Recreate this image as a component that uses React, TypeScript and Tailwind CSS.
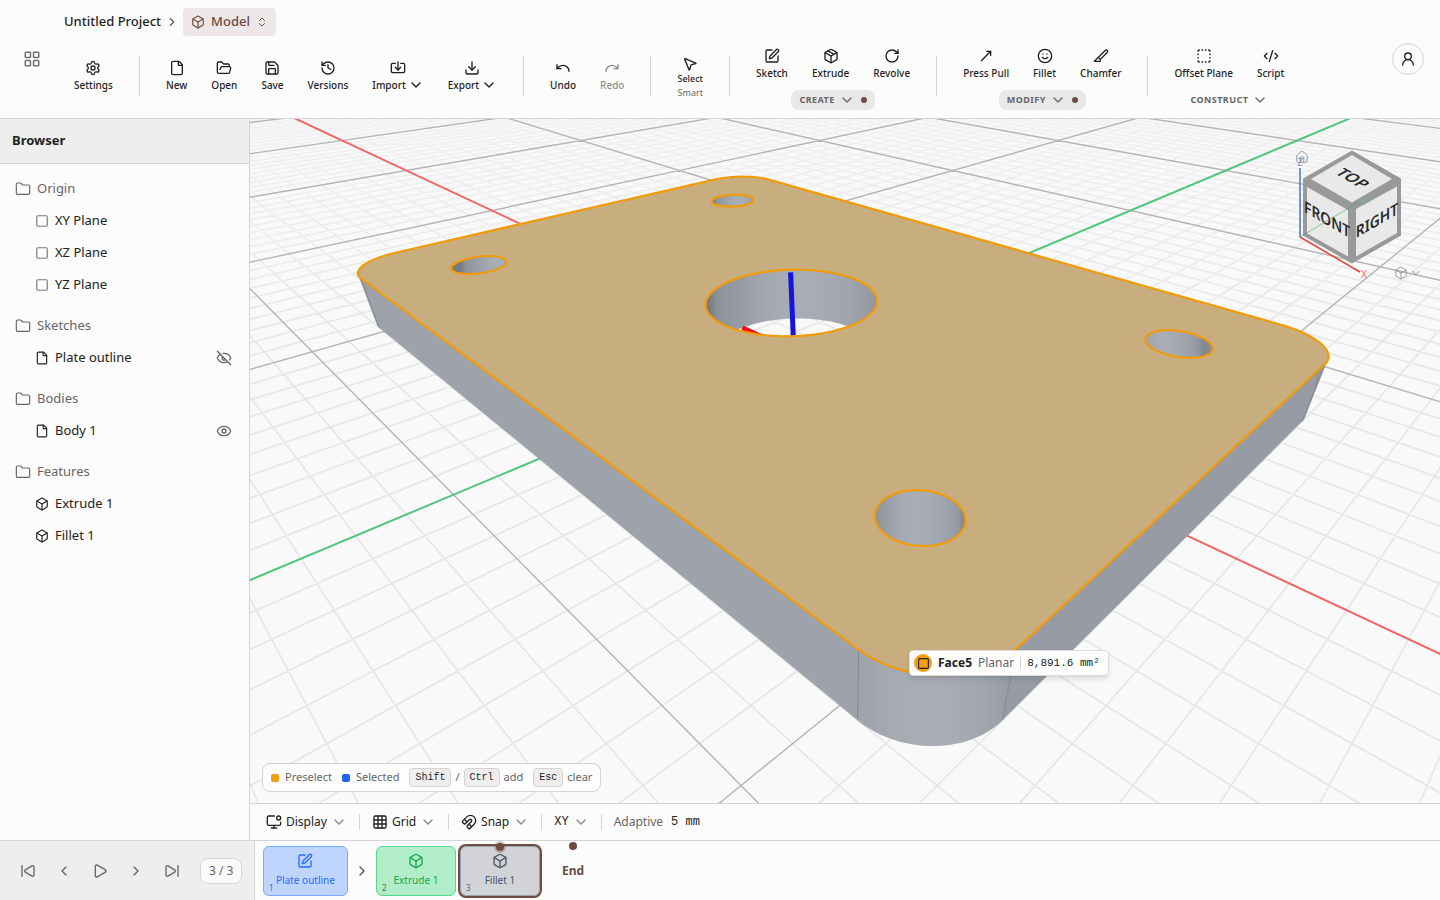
import { useState } from 'react';
import type { ReactNode } from 'react';
import {
  Box, ChevronDown, ChevronLeft, ChevronRight, ChevronsUpDown, CodeXml, Download, Eye, EyeOff, File,
  Folder, FolderOpen, Grid3x3, History, House, Import, LayoutGrid, Magnet, MonitorDot, MousePointer2,
  MoveUpRight, Package, Play, Redo, RotateCw, Save, Settings, SkipBack, SkipForward, Slice, Smile,
  Square, SquareDashed, SquarePen, Undo, UserRound,
} from 'lucide-react';
import type { LucideIcon } from 'lucide-react';
import { clsx } from 'clsx';

/* ---------- scene ---------- */

type Vec3 = [number, number, number];

const VIEW_W = 1190;
const VIEW_H = 721;
const FOCAL = 773.1;
const PLATE = { x: 60, y: 40, h: 8, r: 8 };
const HOLES = [
  { x: -45, y: 25, r: 4 },
  { x: -45, y: -25, r: 4 },
  { x: 45, y: 25, r: 4 },
  { x: 45, y: -25, r: 4 },
  { x: 0, y: 0, r: 12 },
];

// isometric direction, perspective lens (fov 50)
function toCamera([x, y, z]: Vec3): Vec3 {
  return [
    (x + y) / Math.SQRT2 - 7.5,
    (-x + y + 2 * z) / Math.sqrt(6) + 18.75,
    (-x + y - z) / Math.sqrt(3) + 113.5,
  ];
}

function screenPoint([x, y, z]: Vec3): [number, number] {
  return [VIEW_W / 2 + (FOCAL * x) / z, VIEW_H / 2 - (FOCAL * y) / z];
}

function toScreen(p: Vec3) {
  const [x, y] = screenPoint(p);
  return `${x.toFixed(2)} ${y.toFixed(2)}`;
}

const project = (p: Vec3) => toScreen(toCamera(p));
const polygon = (points: Vec3[]) => `M${points.map(project).join('L')}Z`;

// segment clipped against the near plane
function segment(a: Vec3, b: Vec3) {
  const near = 8;
  const p = toCamera(a);
  const q = toCamera(b);
  if (p[2] < near && q[2] < near) return '';
  const cut = (from: Vec3, to: Vec3): Vec3 => {
    if (from[2] >= near) return from;
    const t = (near - from[2]) / (to[2] - from[2]);
    return [from[0] + (to[0] - from[0]) * t, from[1] + (to[1] - from[1]) * t, near];
  };
  return `M${toScreen(cut(p, q))}L${toScreen(cut(q, p))}`;
}

function gridLines(step: number, skip: number) {
  const extent = 700;
  let d = '';
  for (let v = -extent; v <= extent; v += step) {
    if (v % skip === 0) continue;
    d += segment([v, -extent, 0], [v, extent, 0]) + segment([-extent, v, 0], [extent, v, 0]);
  }
  return d;
}

const minorGrid = gridLines(5, 50);
const majorGrid = gridLines(50, 1400);
const axisX = segment([-700, 0, 0], [700, 0, 0]);
const axisY = segment([0, -700, 0], [0, 700, 0]);

function ring(cx: number, cy: number, r: number, z: number, steps = 160): Vec3[] {
  return Array.from({ length: steps }, (_, i) => {
    const a = (i / steps) * Math.PI * 2;
    return [cx + r * Math.cos(a), cy + r * Math.sin(a), z];
  });
}

function plateOutline(z: number): Vec3[] {
  const { x, y, r } = PLATE;
  const corners = [[x - r, y - r], [r - x, y - r], [r - x, r - y], [x - r, r - y]];
  return corners.flatMap(([cx, cy], k) =>
    Array.from({ length: 41 }, (_, i): Vec3 => {
      const a = ((k + i / 40) * Math.PI) / 2;
      return [cx + r * Math.cos(a), cy + r * Math.sin(a), z];
    }),
  );
}

function shade(nx: number, ny: number) {
  const front = Math.max(0, (nx - ny) / Math.SQRT2);
  // soft fill light from the left
  const d = Math.min(1, front + Math.max(0, -(nx + ny)) * (1 - front) * 0.15);
  const stops: [number, number[]][] = [[0, [118, 122, 129]], [0.35, [145, 149, 156]], [0.7, [156, 161, 169]], [1, [168, 173, 182]]];
  const i = d < 0.35 ? 0 : d < 0.7 ? 1 : 2;
  const [d0, c0] = stops[i];
  const [d1, c1] = stops[i + 1];
  const t = Math.min(1, (d - d0) / (d1 - d0));
  const tint = Math.max(0, nx) * 5 * (1 - Math.abs(ny));
  return `rgb(${c0.map((c, k) => Math.round(c + (c1[k] - c) * t - tint)).join(',')})`;
}

interface Wall {
  d: string;
  x1: number;
  x2: number;
  stops: { offset: number; color: string }[];
}

// wall below a closed loop: the facets that face the viewer, shaded across the screen
function wall(loop: Vec3[], inward: boolean): Wall {
  const n = loop.length;
  const s = inward ? -1 : 1;
  const facets = loop.map((a, i) => {
    const b = loop[(i + 1) % n];
    const len = Math.hypot(b[0] - a[0], b[1] - a[1]) || 1;
    const nx = (s * (b[1] - a[1])) / len;
    const ny = (-s * (b[0] - a[0])) / len;
    // camera sits at about (86, -75) in plan
    return { a, b, nx, ny, facing: nx * (86 - a[0]) + ny * (-75 - a[1]) > 0 };
  });
  const first = facets.findIndex((f, i) => f.facing && !facets[(i + n - 1) % n].facing);
  const visible = [];
  for (let i = first; facets[i % n].facing; i++) visible.push(facets[i % n]);

  const top = [visible[0].a, ...visible.map((f) => f.b)];
  const bottom = top.map(([x, y]): Vec3 => [x, y, 0]).reverse();
  const midX = (p: Vec3) => screenPoint(toCamera([p[0], p[1], PLATE.h / 2]))[0];
  const marks = visible
    .flatMap((f) => [f.a, f.b].map((p) => ({ x: midX(p), color: shade(f.nx, f.ny) })))
    .sort((p, q) => p.x - q.x);
  const x1 = marks[0].x;
  const x2 = marks[marks.length - 1].x;
  return {
    d: polygon([...top, ...bottom]),
    x1,
    x2,
    stops: marks.map((m) => ({ offset: (m.x - x1) / (x2 - x1), color: m.color })),
  };
}

const outline = plateOutline(PLATE.h);
const holeRings = HOLES.map((h) => ring(h.x, h.y, h.r, PLATE.h));
const holesPath = holeRings.map(polygon).join('');
const facePath = polygon(outline) + holesPath;
const walls = [wall(outline, false), ...holeRings.map((loop) => wall(loop, true))];
const seams = [[52, -40], [60, -32], [-52, -40], [60, 32]]
  .map(([x, y]) => segment([x, y, PLATE.h], [x, y, 0]))
  .join('');

function Scene() {
  return (
    <svg
      className="absolute inset-0 h-full w-full"
      viewBox={`0 0 ${VIEW_W} ${VIEW_H}`}
      preserveAspectRatio="xMidYMid slice"
      aria-label="Model viewport"
    >
      <defs>
        <linearGradient id="minor" gradientUnits="userSpaceOnUse" x1="0" y1="0" x2="0" y2="240">
          <stop offset="0" stopColor="#f2f2f2" />
          <stop offset="1" stopColor="#e7e7e7" />
        </linearGradient>
        {walls.map((w, i) => (
          <linearGradient key={i} id={`wall-${i}`} gradientUnits="userSpaceOnUse" x1={w.x1} x2={w.x2} y1="0" y2="0">
            {w.stops.map((stop, k) => (
              <stop key={k} offset={stop.offset} stopColor={stop.color} />
            ))}
          </linearGradient>
        ))}
        <clipPath id="holes">
          <path d={holesPath} />
        </clipPath>
      </defs>
      <path d={minorGrid} stroke="url(#minor)" strokeWidth="1.8" fill="none" />
      <path d={majorGrid} stroke="#b4b4b4" strokeWidth="1.4" fill="none" />
      <path d={axisX} stroke="#f26566" strokeWidth="2" fill="none" />
      <path d={axisY} stroke="#50c57e" strokeWidth="2" fill="none" />

      <path d={walls[0].d} fill="url(#wall-0)" />
      <path d={seams} stroke="#858990" strokeWidth="1" fill="none" />

      <g clipPath="url(#holes)">
        {walls.slice(1).map((w, i) => (
          <path key={i} d={w.d} fill={`url(#wall-${i + 1})`} />
        ))}
        <path d={segment([-12, 0, 0], [-6, 0, 0])} stroke="#ee1515" strokeWidth="5" />
        <path d={segment([0, 0, 0], [0, 0, 12])} stroke="#1414dc" strokeWidth="5" />
      </g>

      <path d={facePath} fill="#c8ad7f" fillRule="evenodd" stroke="#f09b0c" strokeWidth="2.2" strokeLinejoin="round" />
    </svg>
  );
}

/* ---------- view cube ---------- */

function ViewCube() {
  return (
    <div className="absolute top-[26px] right-0 h-[145px] w-[150px]">
      <svg className="h-full w-full" viewBox="0 0 150 145" aria-label="View cube">
        <path d="M62 5.500 111 33.500V90.500L62 118.500 13 90.500V33.500Z" fill="#999" />
        <path d="M62 10 102 34 62 57.500 21 34Z" fill="#e9e9e9" />
        <path d="M17 42 58 65V111.500L17 88.500Z" fill="#e9e9e9" />
        <path d="M66 64 107 41.500V88L66 111.500Z" fill="#e9e9e9" />
        <g fill="#2a2a2a" fontFamily="Noto Sans, sans-serif" fontWeight="600" fontSize="16" textAnchor="middle">
          <text transform="matrix(.866 .5 -.866 .5 63 33)" y="6">TOP</text>
          <text transform="matrix(.866 .5 0 1 37 74)" y="6">FRONT</text>
          <text transform="matrix(.866 -.5 0 1 87 75)" y="6">RIGHT</text>
        </g>
        <path d="M10 92 69 57" stroke="#3ea75a" strokeOpacity="0.45" strokeWidth="1.2" />
        <path d="M10 92V23" stroke="#4375d8" strokeWidth="1.5" />
        <path d="M10 92 70 127" stroke="#e0463e" strokeWidth="1.5" />
        <g fontFamily="Noto Sans, sans-serif" fontSize="10" textAnchor="middle">
          <text x="10" y="21" fill="#7d9fe8">Z</text>
          <text x="74" y="60" fill="#6fb583">Y</text>
          <text x="74" y="133" fill="#ea6f6a">X</text>
        </g>
      </svg>
      <button aria-label="Home view" className="absolute top-[5px] left-[5px] text-[#8c8c8c]">
        <House size={14} strokeWidth={1.5} />
      </button>
      <button aria-label="View options" className="absolute top-[121px] left-[104px] flex items-center gap-0.5 text-[#8c8c8c]">
        <Box size={14} strokeWidth={1.5} />
        <ChevronDown size={12} />
      </button>
    </div>
  );
}

/* ---------- ribbon ---------- */

interface ToolProps {
  icon: LucideIcon;
  label: string;
  menu?: boolean;
  disabled?: boolean;
}

function Tool({ icon: Icon, label, menu, disabled }: ToolProps) {
  return (
    <button
      disabled={disabled}
      className={clsx('flex flex-col items-center gap-0.5 px-2.5 py-1.5 text-[#1f1f1f]', disabled && 'opacity-50')}
    >
      <Icon size={16} />
      <span className="flex h-3.5 items-center gap-0.5 text-[10px] leading-[14px] font-medium whitespace-nowrap">
        {label}
        {menu && <ChevronDown size={16} />}
      </span>
    </button>
  );
}

function Divider() {
  return <div className="mx-4 h-10 w-px shrink-0 bg-[#d4d4d4]" />;
}

function ToolGroup({ label, pinned, children }: { label: string; pinned?: boolean; children: ReactNode }) {
  return (
    <div className="flex flex-col items-center gap-1">
      <div className="flex gap-1">{children}</div>
      <button
        className={clsx(
          'flex h-5 items-center gap-1 rounded-lg px-2 text-[9px] leading-3 font-bold tracking-wider text-[#666] uppercase',
          pinned && 'bg-[#e8e8e8]',
        )}
      >
        {label}
        <ChevronDown size={16} />
        {pinned && <span className="ml-0.5 h-1.5 w-1.5 rounded-full bg-[#6d4c41]" />}
      </button>
    </div>
  );
}

function Header() {
  return (
    <header className="flex h-[119px] shrink-0 border-b border-[#d4d4d4] bg-[#fcfcfc]">
      <div className="flex h-[118px] w-16 shrink-0 items-center justify-center">
        <button aria-label="All apps" className="text-[#707070]">
          <LayoutGrid size={18} />
        </button>
      </div>
      <div className="min-w-0 flex-1">
        <div className="flex h-9 items-center gap-1 pt-2 text-[13px] font-medium text-[#1f1f1f]">
          <a href="#project">Untitled Project</a>
          <ChevronRight size={14} className="text-[#555]" />
          <button className="flex h-7 items-center gap-1.5 rounded bg-[#ede8e7] px-2 text-[#6d4c41]">
            <Box size={14} />
            Model
            <ChevronsUpDown size={12} />
          </button>
        </div>
        <div className="mt-1.5 flex h-[68px] items-center">
          <Tool icon={Settings} label="Settings" />
          <Divider />
          <div className="flex gap-1">
            <Tool icon={File} label="New" />
            <Tool icon={FolderOpen} label="Open" />
            <Tool icon={Save} label="Save" />
            <Tool icon={History} label="Versions" />
            <Tool icon={Import} label="Import" menu />
            <Tool icon={Download} label="Export" menu />
          </div>
          <Divider />
          <div className="flex gap-1">
            <Tool icon={Undo} label="Undo" />
            <Tool icon={Redo} label="Redo" disabled />
          </div>
          <Divider />
          <button className="flex flex-col items-center px-2.5 pt-1 text-[9px] leading-[14px] font-medium text-[#1f1f1f]">
            <MousePointer2 size={16} />
            <span>Select</span>
            <span className="font-normal text-[#666]">Smart</span>
          </button>
          <Divider />
          <ToolGroup label="Create" pinned>
            <Tool icon={SquarePen} label="Sketch" />
            <Tool icon={Package} label="Extrude" />
            <Tool icon={RotateCw} label="Revolve" />
          </ToolGroup>
          <Divider />
          <ToolGroup label="Modify" pinned>
            <Tool icon={MoveUpRight} label="Press Pull" />
            <Tool icon={Smile} label="Fillet" />
            <Tool icon={Slice} label="Chamfer" />
          </ToolGroup>
          <Divider />
          <ToolGroup label="Construct">
            <Tool icon={SquareDashed} label="Offset Plane" />
            <Tool icon={CodeXml} label="Script" />
          </ToolGroup>
        </div>
      </div>
      <div className="flex h-[118px] w-16 shrink-0 items-center justify-center">
        <button aria-label="Account" className="flex h-8 w-8 items-center justify-center rounded-full border border-[#d4d4d4] text-[#1f1f1f]">
          <UserRound size={16} />
        </button>
      </div>
    </header>
  );
}

/* ---------- browser tree ---------- */

interface TreeItem {
  name: string;
  icon: LucideIcon;
  muted?: boolean;
  visible?: boolean;
}

const tree: { name: string; items: TreeItem[] }[] = [
  {
    name: 'Origin',
    items: [
      { name: 'XY Plane', icon: Square, muted: true },
      { name: 'XZ Plane', icon: Square, muted: true },
      { name: 'YZ Plane', icon: Square, muted: true },
    ],
  },
  { name: 'Sketches', items: [{ name: 'Plate outline', icon: File, visible: false }] },
  { name: 'Bodies', items: [{ name: 'Body 1', icon: File, visible: true }] },
  { name: 'Features', items: [{ name: 'Extrude 1', icon: Box }, { name: 'Fillet 1', icon: Box }] },
];

function Sidebar() {
  return (
    <aside className="w-[250px] shrink-0 border-r border-[#d4d4d4] bg-[#fcfcfc] text-[13px] text-[#222]">
      <h2 className="flex h-[45px] items-center border-b border-[#d4d4d4] bg-[#eee] px-3 font-bold">Browser</h2>
      <div className="flex flex-col gap-[9px] pt-[9px]">
        {tree.map((group) => (
          <section key={group.name}>
            <h3 className="flex h-8 items-center gap-1.5 pl-[15px] text-[#666]">
              <Folder size={16} strokeWidth={1.75} />
              {group.name}
            </h3>
            <ul>
              {group.items.map(({ name, icon: Icon, muted, visible }) => (
                <li key={name} className="flex h-8 items-center gap-1.5 pr-[17px] pl-[35px]">
                  <Icon size={14} className={muted ? 'text-[#777]' : undefined} />
                  <span className="flex-1">{name}</span>
                  {visible !== undefined && (
                    <button aria-label={`Toggle ${name}`} className="text-[#666]">
                      {visible ? <Eye size={16} /> : <EyeOff size={16} />}
                    </button>
                  )}
                </li>
              ))}
            </ul>
          </section>
        ))}
      </div>
    </aside>
  );
}

/* ---------- viewport overlays ---------- */

function Kbd({ children }: { children: ReactNode }) {
  return (
    <kbd className="flex h-[19px] items-center rounded-sm border border-[#d4d4d4] bg-[#eee] px-[5px] font-['Liberation_Mono',monospace] text-[10px] text-[#222]">
      {children}
    </kbd>
  );
}

function Legend() {
  return (
    <div className="absolute bottom-12 left-3 flex h-[29px] items-center rounded-lg border border-[#d4d4d4] bg-[#fdfdfd] px-2 text-[11px] text-[#666]">
      <span className="mr-1.5 h-2 w-2 rounded-[2px] bg-[#f59e0b]" />
      Preselect
      <span className="mr-1.5 ml-2.5 h-2 w-2 rounded-[2px] bg-[#2563eb]" />
      Selected
      <span className="ml-2.5 flex items-center gap-1">
        <Kbd>Shift</Kbd>/<Kbd>Ctrl</Kbd>add
      </span>
      <span className="ml-2.5 flex items-center gap-1">
        <Kbd>Esc</Kbd>clear
      </span>
    </div>
  );
}

function FaceTooltip() {
  return (
    <div className="absolute top-[531px] left-[659px] flex h-[26px] items-center gap-1.5 rounded border border-[#ddd] bg-[#fdfdfd] pr-2 pl-1 text-[12px] text-[#666] shadow-md">
      <span className="flex h-[18px] w-[18px] items-center justify-center rounded-full bg-[#f59e0b] text-[#222]">
        <Square size={13} />
      </span>
      <span className="font-bold text-[#222]">Face5</span>
      <span>Planar</span>
      <span className="h-3 w-px bg-[#d4d4d4]" />
      <span className="font-['Liberation_Mono',monospace] text-[11px] text-[#222]">8,891.6 mm²</span>
    </div>
  );
}

const statusMenus = [
  { label: 'Display', icon: MonitorDot },
  { label: 'Grid', icon: Grid3x3 },
  { label: 'Snap', icon: Magnet },
];

function StatusBar() {
  return (
    <div className="absolute inset-x-0 bottom-0 flex h-[37px] items-center border-t border-[#d4d4d4] bg-[#fcfcfc]/95 pl-4 text-[12px] text-[#222]">
      {statusMenus.map(({ label, icon: Icon }) => (
        <div key={label} className="flex items-center">
          <button className="flex items-center gap-1">
            <Icon size={16} />
            {label}
            <ChevronDown size={16} className="text-[#888]" />
          </button>
          <span className="mx-3 h-4 w-px bg-[#d4d4d4]" />
        </div>
      ))}
      <button className="flex items-center gap-1 font-['Liberation_Mono',monospace]">
        XY
        <ChevronDown size={16} className="text-[#888]" />
      </button>
      <span className="mx-3 h-4 w-px bg-[#d4d4d4]" />
      <span className="text-[#666]">Adaptive</span>
      <span className="ml-2 font-['Liberation_Mono',monospace]">5 mm</span>
    </div>
  );
}

/* ---------- timeline ---------- */

const transport = [
  { label: 'First', icon: SkipBack },
  { label: 'Previous', icon: ChevronLeft },
  { label: 'Play', icon: Play },
  { label: 'Next', icon: ChevronRight },
  { label: 'Last', icon: SkipForward },
];

interface StepProps {
  index: number;
  label: string;
  icon: LucideIcon;
  className: string;
  active?: boolean;
  onSelect: (index: number) => void;
}

function Step({ index, label, icon: Icon, className, active, onSelect }: StepProps) {
  return (
    <button
      onClick={() => onSelect(index)}
      className={clsx(
        'relative flex h-[50px] flex-col items-center gap-1 rounded-md border px-3 pt-1.5 text-[10px] leading-[14px]',
        className,
        active && 'ring-2 ring-[#6d4c41]',
      )}
    >
      <Icon size={16} />
      {label}
      <span className="absolute bottom-0.5 left-[5px] text-[8px] leading-[10px] text-[#666]">{index}</span>
      {active && (
        <span className="absolute -top-1 left-1/2 h-2 w-2 -translate-x-1/2 rounded-full bg-[#6d4c41] ring-2 ring-[#6d4c41]/30" />
      )}
    </button>
  );
}

function Timeline() {
  const [current, setCurrent] = useState(3);

  return (
    <footer className="flex h-[60px] shrink-0 border-t border-[#d4d4d4] bg-[#fcfcfc]">
      <div className="flex w-[255px] shrink-0 items-center gap-1 border-r border-[#d4d4d4] bg-[#eee] pl-3 text-[#666]">
        {transport.map(({ label, icon: Icon }) => (
          <button key={label} aria-label={label} className="flex h-8 w-8 items-center justify-center">
            <Icon size={16} />
          </button>
        ))}
        <span className="ml-2 flex h-[26px] items-center rounded-lg border border-[#d8d8d8] bg-[#fafafa] px-2 text-[12px]">
          {current} / 3
        </span>
      </div>
      <div className="flex min-w-0 flex-1 items-center pl-2">
        <Step index={1} label="Plate outline" icon={SquarePen} active={current === 1} onSelect={setCurrent} className="border-[#7aa9ff] bg-[#bdd5ff] text-[#2a68ff]" />
        <ChevronRight size={16} className="mx-1.5 text-[#555]" />
        <Step index={2} label="Extrude 1" icon={Box} active={current === 2} onSelect={setCurrent} className="w-20 border-[#57da8a] bg-[#b1edc9] text-[#12a84b]" />
        <Step index={3} label="Fillet 1" icon={Box} active={current === 3} onSelect={setCurrent} className="ml-1 w-20 border-[#9aa3b0] bg-[#d1d3d9] text-[#4b5563]" />
        <div className="flex h-full flex-col items-center pt-px pl-[22px] text-[12px] font-bold text-[#6d4c41]">
          <span className="h-2 w-2 rounded-full bg-[#6d4c41]" />
          <span className="mt-3">End</span>
        </div>
      </div>
    </footer>
  );
}

export default function App() {
  return (
    <div className="flex h-screen flex-col overflow-hidden bg-[#fcfcfc] font-['Noto_Sans',sans-serif]">
      <Header />
      <div className="flex min-h-0 flex-1">
        <Sidebar />
        <main className="relative min-w-0 flex-1 overflow-hidden bg-[#f9f9f9]">
          <Scene />
          <ViewCube />
          <FaceTooltip />
          <Legend />
          <StatusBar />
        </main>
      </div>
      <Timeline />
    </div>
  );
}
